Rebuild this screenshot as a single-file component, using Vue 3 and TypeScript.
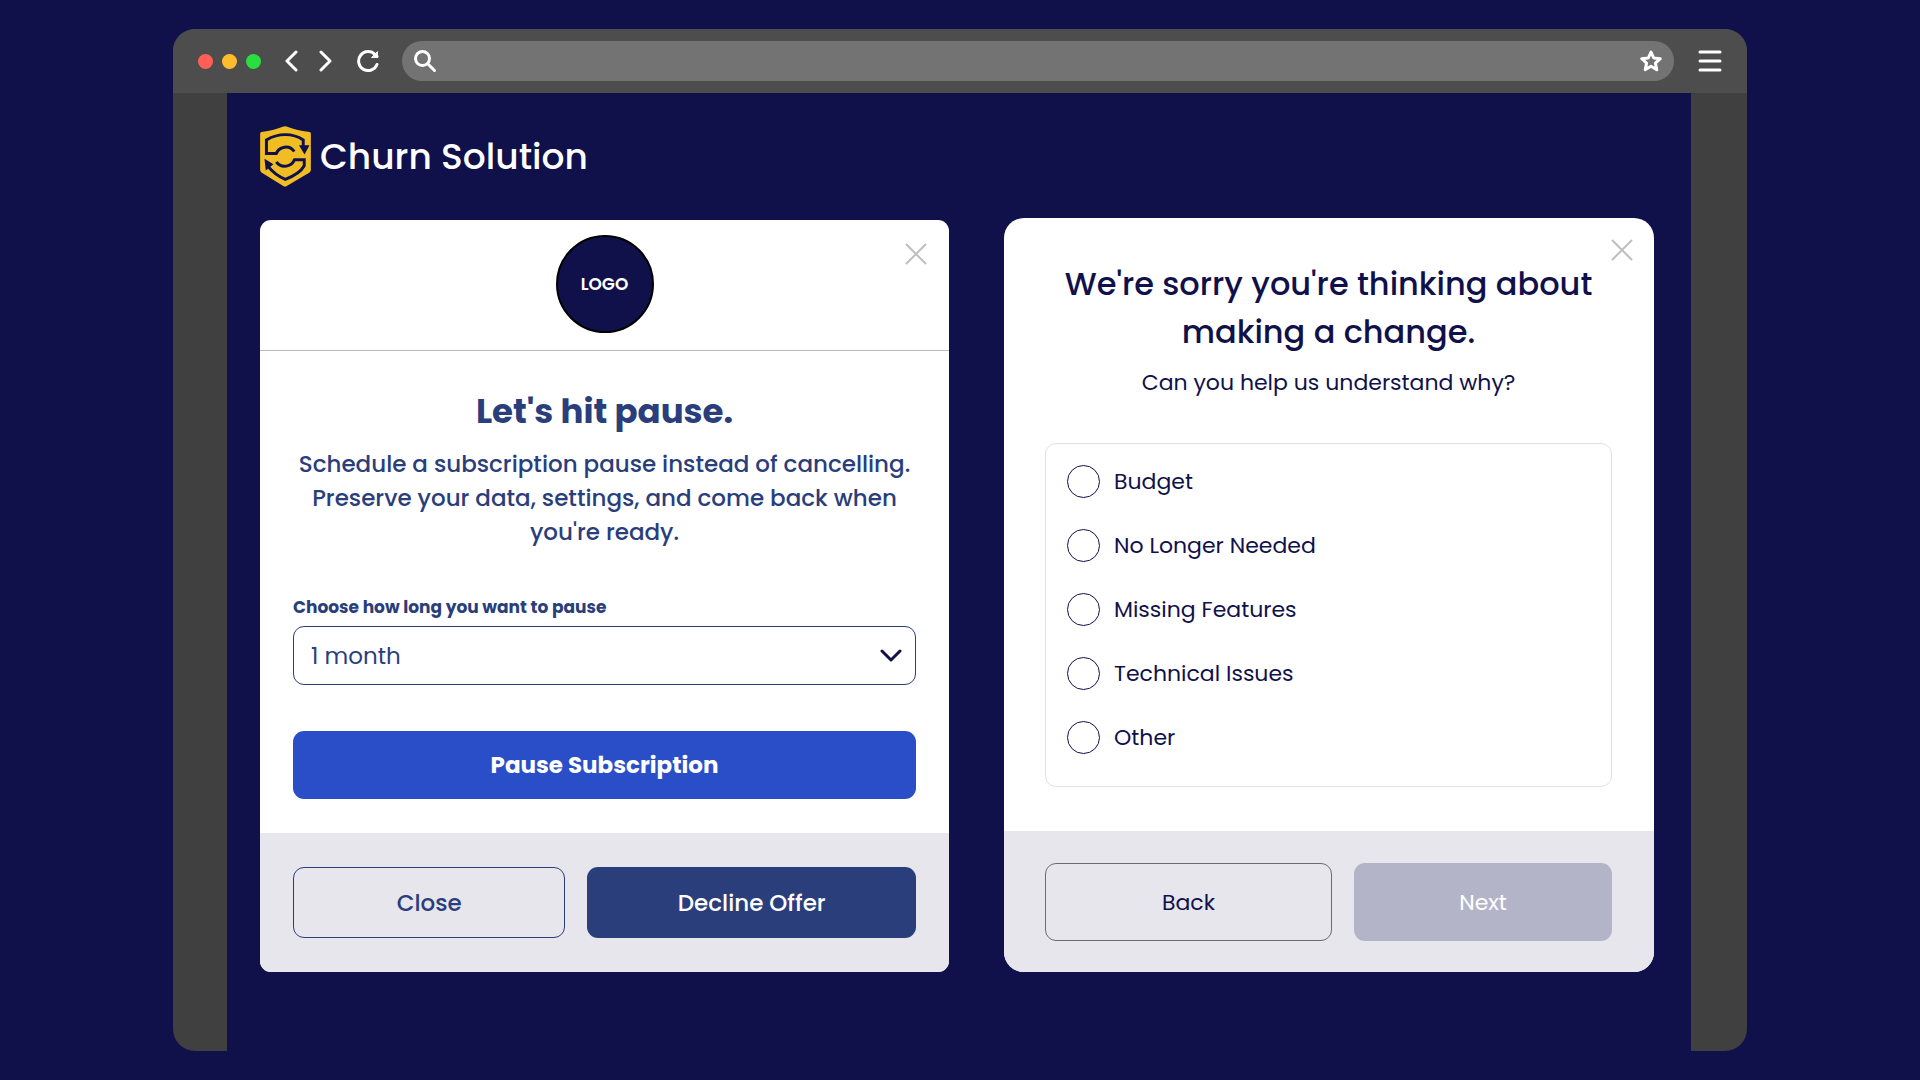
<script setup lang="ts">
import { ref } from 'vue'

const reasons: string[] = ['Budget', 'No Longer Needed', 'Missing Features', 'Technical Issues', 'Other']
const durations: string[] = ['1 month', '2 months', '3 months']

const duration = ref('1 month')
const reason = ref('')
const address = ref('')
</script>

<template>
  <div class="desktop">
    <div class="window">
      <header class="toolbar">
        <div class="lights">
          <span class="light red"></span>
          <span class="light amber"></span>
          <span class="light green"></span>
        </div>
        <nav class="nav">
          <button type="button" class="icon-btn" aria-label="Back">
            <svg width="14" height="24" viewBox="0 0 14 24"><path d="M12 3 3 12l9 9" /></svg>
          </button>
          <button type="button" class="icon-btn" aria-label="Forward">
            <svg width="14" height="24" viewBox="0 0 14 24"><path d="m2 3 9 9-9 9" /></svg>
          </button>
          <button type="button" class="icon-btn" aria-label="Reload">
            <svg width="26" height="24" viewBox="0 0 26 24">
              <path d="M23 15.5A9.5 9.5 0 1 1 21 5.500L23 7.500" />
              <path d="M23.500 3v5.500H18z" class="filled" />
            </svg>
          </button>
        </nav>
        <div class="address">
          <svg class="stroke" width="24" height="24" viewBox="0 0 24 24">
            <circle cx="9.500" cy="9.500" r="7" /><path d="m15 15 6.500 6.500" />
          </svg>
          <input v-model="address" type="text" aria-label="Address" />
          <button type="button" class="icon-btn" aria-label="Bookmark">
            <svg width="24" height="24" viewBox="0 0 24 24">
              <path d="m12 3 2.700 6 6.600.7-4.900 4.400 1.400 6.600L12 17.300 6.200 20.700l1.400-6.600L2.700 9.700 9.300 9z" />
            </svg>
          </button>
        </div>
        <button type="button" class="icon-btn" aria-label="Menu">
          <svg width="24" height="24" viewBox="0 0 24 24"><path d="M2 3h20M2 12h20M2 21h20" /></svg>
        </button>
      </header>

      <main class="page">
        <div class="brand">
          <svg width="51" height="61" viewBox="60 44 153 184" aria-hidden="true">
            <path d="M64 62Q105 56 128 46Q135 43 142 46Q165 56 209 62Q213 63 213 67V177Q213 181 209 184L139 226Q135 229 131 226L64 184Q60 181 60 177V67Q60 63 64 62Z" fill="#f0bd25" />
            <g fill="none" stroke="#10114a" stroke-width="9">
              <path d="M111 127H79V86Q106 70 136 70Q166 70 190 86V104" />
              <path d="M108 129A31 31 0 0 1 163 121" />
              <path d="M161 146H193V164Q180 188 136 205Q104 192 84 166" />
              <path d="M164 144A31 31 0 0 1 109 152" />
            </g>
            <path d="M177 102h32l-15 28zM73 143l27 16-23 19z" fill="#10114a" />
          </svg>
          <span>Churn Solution</span>
        </div>

        <div class="cards">
          <section class="card pause">
            <div class="card-head">
              <div class="logo">LOGO</div>
            </div>
            <button type="button" class="close" aria-label="Dismiss">
              <svg width="22" height="22" viewBox="0 0 22 22"><path d="m1 1 20 20M21 1 1 21" /></svg>
            </button>
            <div class="card-body">
              <h1>Let's hit pause.</h1>
              <p class="lead">
                Schedule a subscription pause instead of cancelling.
                Preserve your data, settings, and come back when you're ready.
              </p>
              <label class="field-label" for="duration">Choose how long you want to pause</label>
              <div class="select">
                <select id="duration" v-model="duration">
                  <option v-for="d in durations" :key="d">{{ d }}</option>
                </select>
                <svg width="22" height="14" viewBox="0 0 22 14"><path d="m2 2 9 9 9-9" /></svg>
              </div>
              <button type="button" class="btn primary">Pause Subscription</button>
            </div>
            <footer class="card-foot">
              <button type="button" class="btn outline">Close</button>
              <button type="button" class="btn navy">Decline Offer</button>
            </footer>
          </section>

          <section class="card survey">
            <button type="button" class="close" aria-label="Dismiss">
              <svg width="22" height="22" viewBox="0 0 22 22"><path d="m1 1 20 20M21 1 1 21" /></svg>
            </button>
            <div class="card-body">
              <h2>We're sorry you're thinking about making a change.</h2>
              <p class="sub">Can you help us understand why?</p>
              <div class="options" role="radiogroup">
                <label v-for="r in reasons" :key="r" class="option">
                  <input v-model="reason" type="radio" name="reason" :value="r" />
                  <span>{{ r }}</span>
                </label>
              </div>
            </div>
            <footer class="card-foot">
              <button type="button" class="btn outline">Back</button>
              <button type="button" class="btn muted">Next</button>
            </footer>
          </section>
        </div>
      </main>
    </div>
  </div>
</template>

<style>
body {
  background: #10114a;
}
</style>

<style scoped>
* {
  box-sizing: border-box;
}
.desktop {
  display: flex;
  min-height: 100vh;
  padding: 29px 173px;
  background: #10114a;
  font-family: Poppins, Inter, sans-serif;
}
.window {
  display: flex;
  flex-direction: column;
  flex: 1;
  border-radius: 22px;
  background: #404040;
  overflow: hidden;
}
button,
input,
select {
  font: inherit;
  margin: 0;
}
button {
  cursor: pointer;
}
.toolbar {
  display: flex;
  align-items: center;
  height: 64px;
  padding: 0 25px;
  background: #4d4d4d;
}
.lights {
  display: flex;
  gap: 9px;
}
.light {
  width: 15px;
  height: 15px;
  border-radius: 50%;
}
.red {
  background: #ff5f57;
}
.amber {
  background: #ffbd2e;
}
.green {
  background: #2ade40;
}
.nav {
  display: flex;
  gap: 21px;
  margin: 0 22px 0 23px;
}
.icon-btn {
  display: flex;
  padding: 0;
  border: 0;
  background: none;
}
.icon-btn svg,
.stroke {
  fill: none;
  stroke: #fff;
  stroke-width: 3;
  stroke-linecap: round;
  stroke-linejoin: round;
}
.icon-btn .filled {
  fill: #fff;
  stroke-width: 1;
}
.address {
  display: flex;
  align-items: center;
  flex: 1;
  height: 40px;
  padding: 0 11px;
  margin-right: 24px;
  border-radius: 20px;
  background: #737373;
}
.address input {
  flex: 1;
  min-width: 0;
  border: 0;
  outline: 0;
  background: none;
  color: #fff;
}
.page {
  flex: 1;
  margin: 0 56px 0 54px;
  padding: 33px 37px 79px 33px;
  background: #10114a;
}
.brand {
  display: flex;
  align-items: center;
  gap: 9px;
  color: #fff;
  font-size: 36px;
  font-weight: 500;
  line-height: 61px;
}
.cards {
  display: grid;
  grid-template-columns: 689fr 650fr;
  gap: 55px;
  align-items: end;
  margin-top: 31px;
}
.card {
  position: relative;
  overflow: hidden;
  background: #fff;
}
.pause {
  border-radius: 11px;
  color: #2a3e7c;
}
.survey {
  border-radius: 20px;
  color: #10114a;
}
.close {
  position: absolute;
  top: 23px;
  right: 22px;
  display: flex;
  padding: 0;
  border: 0;
  background: none;
}
.close svg {
  fill: none;
  stroke: #bfbfbf;
  stroke-width: 2;
}
.survey .close {
  top: 21px;
  right: 21px;
}
.card-head {
  display: flex;
  justify-content: center;
  padding: 15px 0 17px;
  border-bottom: 1px solid #b8b8b8;
}
.logo {
  width: 98px;
  height: 98px;
  border: 2px solid #000;
  border-radius: 50%;
  background: #10114a;
  color: #fff;
  font-size: 17px;
  font-weight: 600;
  line-height: 95px;
  text-align: center;
}
.pause .card-body {
  padding: 34px 33px 34px;
}
h1 {
  margin: 0;
  font-size: 34px;
  font-weight: 700;
  line-height: 52px;
  text-align: center;
}
.lead {
  margin: 10px 0 46px;
  font-size: 23px;
  font-weight: 500;
  line-height: 34px;
  text-align: center;
}
.field-label {
  display: block;
  margin-bottom: 7px;
  font-size: 17px;
  font-weight: 700;
  line-height: 24px;
}
.select {
  position: relative;
}
.select select {
  display: block;
  width: 100%;
  height: 59px;
  padding: 0 17px;
  border: 1px solid #2a3e7c;
  border-radius: 11px;
  appearance: none;
  background: #fff;
  color: inherit;
  font-size: 23px;
}
.select svg {
  position: absolute;
  top: 23px;
  right: 14px;
  fill: none;
  stroke: #10114a;
  stroke-width: 3;
  stroke-linecap: round;
  stroke-linejoin: round;
  pointer-events: none;
}
.btn {
  padding: 0;
  border: 0;
  border-radius: 11px;
  font-size: 23px;
  font-weight: 500;
  text-align: center;
}
.primary {
  display: block;
  width: 100%;
  height: 68px;
  margin-top: 46px;
  background: #2a4ec7;
  color: #fff;
  font-weight: 700;
}
.card-foot {
  display: grid;
  gap: 22px;
  background: #e7e6ec;
}
.pause .card-foot {
  grid-template-columns: 272fr 328fr;
  padding: 34px 33px;
}
.pause .card-foot .btn {
  height: 71px;
}
.outline {
  border: 1px solid #2a3e7c;
  background: none;
  color: inherit;
}
.navy {
  background: #2a3e7c;
  color: #fff;
}
.survey .card-body {
  padding: 42px 42px 44px 41px;
}
h2 {
  margin: 0;
  font-size: 32px;
  font-weight: 500;
  line-height: 48px;
  text-align: center;
}
.sub {
  margin: 10px 0 43px;
  font-size: 22px;
  line-height: 34px;
  text-align: center;
}
.options {
  display: flex;
  flex-direction: column;
  gap: 31px;
  padding: 21px;
  padding-bottom: 32px;
  border: 1px solid #e0e0e8;
  border-radius: 11px;
}
.option {
  display: flex;
  align-items: center;
  gap: 14px;
  font-size: 22px;
  line-height: 33px;
}
.option input {
  width: 33px;
  height: 33px;
  border: 1px solid #10114a;
  border-radius: 50%;
  appearance: none;
  background: #fff;
}
.option input:checked {
  box-shadow: inset 0 0 0 6px #fff;
  background: #10114a;
}
.survey .card-foot {
  grid-template-columns: 287fr 258fr;
  padding: 32px 42px 31px 41px;
}
.survey .card-foot .btn {
  height: 78px;
  font-size: 22px;
  font-weight: 400;
}
.survey .outline {
  border-color: #6c6c70;
}
.muted {
  background: #b3b4c8;
  color: #fff;
}
</style>
